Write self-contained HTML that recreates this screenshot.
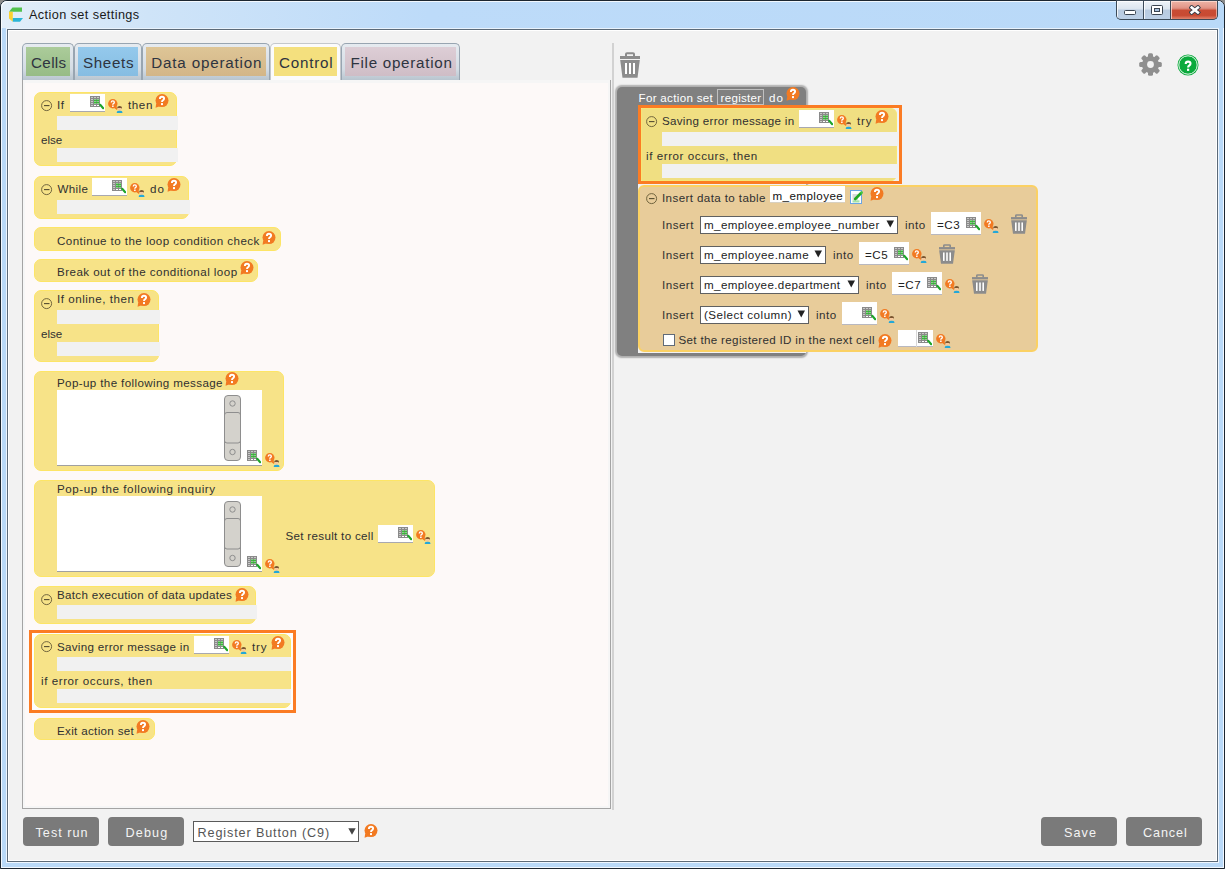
<!DOCTYPE html><html><head><meta charset="utf-8"><style>
html,body{margin:0;padding:0;width:1225px;height:869px;overflow:hidden;background:#8c8c8c;font-family:"Liberation Sans", sans-serif;}
</style></head><body>
<div style="position:absolute;left:0px;top:0px;width:1225px;height:869px;background:#b9d9f8;border-radius:7px 7px 0 0;box-sizing:border-box;border:1px solid #1c2630;"></div>
<div style="position:absolute;left:1px;top:1px;width:1223px;height:28px;background:linear-gradient(90deg,#e2eef9 0%,#cfe4f8 12%,#bddbf9 35%,#b9d9f8 100%);border-radius:6px 6px 0 0;box-shadow:inset 1px 1px 0 rgba(255,255,255,0.8);"></div>
<div style="position:absolute;left:1px;top:28px;width:6px;height:840px;background:#b9d9f8;"></div>
<div style="position:absolute;left:1218px;top:28px;width:6px;height:840px;background:#b9d9f8;"></div>
<div style="position:absolute;left:1px;top:862px;width:1223px;height:6px;background:#b9d9f8;"></div>
<div style="position:absolute;left:1px;top:28px;width:1px;height:840px;background:#f2f8ff;"></div>
<div style="position:absolute;left:6px;top:28px;width:1px;height:835px;background:#eef6ff;"></div>
<div style="position:absolute;left:1223px;top:28px;width:1px;height:840px;background:#f2f8ff;"></div>
<div style="position:absolute;left:1218px;top:28px;width:1px;height:835px;background:#eef6ff;"></div>
<div style="position:absolute;left:6px;top:862px;width:1213px;height:1px;background:#eef6ff;"></div>
<div style="position:absolute;left:1px;top:867px;width:1223px;height:1px;background:#f2f8ff;"></div>
<div style="position:absolute;left:6px;top:28px;width:1213px;height:1px;background:#e8f2fc;"></div>
<div style="position:absolute;left:7px;top:29px;width:1211px;height:833px;background:#f2f2f2;box-sizing:border-box;border:1px solid #5c6a78;box-shadow:inset 1px 1px 0 #fff, inset -1px -1px 0 #fff;"></div>
<svg style="position:absolute;left:9px;top:7px;" width="15" height="16" viewBox="0 0 15 16"><path d="M3.5 0.6 L13 0.6 L13 4.7 L0 4.7 Z" fill="#52c24e"/><path d="M0 4.7 L3.8 4.7 L3.8 14.7 L0 11.6 Z" fill="#fcd232"/><path d="M3.8 10.9 L14 10.9 L11 14.7 L3.8 14.7 Z" fill="#2ab4d6"/></svg>
<div style="position:absolute;left:29px;top:9.25px;font-size:12.70px;line-height:12.70px;color:#1a1a1a;white-space:nowrap;letter-spacing:0.4px;">Action set settings</div>
<div style="position:absolute;left:1116px;top:0;width:102px;height:20px;border:1px solid #3c4a58;border-top:none;border-radius:0 0 5px 5px;box-sizing:border-box;overflow:hidden;background:#3c4a58;"><div style="position:absolute;left:0;top:1px;width:26px;height:18px;background:linear-gradient(#eef3f8 0%,#dbe5ef 45%,#b9cbe0 50%,#bcd0e6 100%);box-shadow:inset 1px 1px 0 rgba(255,255,255,0.8);"></div><div style="position:absolute;left:27px;top:1px;width:26px;height:18px;background:linear-gradient(#eef3f8 0%,#dbe5ef 45%,#b9cbe0 50%,#bcd0e6 100%);box-shadow:inset 1px 1px 0 rgba(255,255,255,0.8);"></div><div style="position:absolute;left:54px;top:1px;width:46px;height:18px;background:linear-gradient(#edb4a6 0%,#e3988a 35%,#d88070 45%,#c94c34 50%,#c84a32 80%,#e2846e 100%);box-shadow:inset 1px 1px 0 rgba(255,220,210,0.8), inset -1px 0 0 rgba(255,220,210,0.6);"></div></div>
<div style="position:absolute;left:1124px;top:10px;width:12px;height:5px;background:#fff;border:1px solid #3a4450;border-radius:1.5px;box-sizing:border-box;"></div>
<div style="position:absolute;left:1151px;top:5px;width:12px;height:10px;background:#fff;border:1px solid #3a4450;border-radius:1.5px;box-sizing:border-box;"></div>
<div style="position:absolute;left:1154px;top:8px;width:6px;height:4px;background:#a8c0dc;border:1px solid #3a4450;box-sizing:border-box;"></div>
<svg style="position:absolute;left:1189px;top:5px;" width="12" height="10" viewBox="0 0 12 10"><path d="M2.7 2.5 L8.9 7.5 M8.9 2.5 L2.7 7.5" stroke="#3a3f48" stroke-width="4.4" stroke-linecap="square"/><path d="M2.7 2.5 L8.9 7.5 M8.9 2.5 L2.7 7.5" stroke="#fff" stroke-width="2.6" stroke-linecap="square"/></svg>
<div style="position:absolute;left:22px;top:43px;width:52px;height:37px;background:linear-gradient(#e6ebf0,#d4dce4 70%,#b9c5cf);border:1px solid #98a5b1;border-bottom:none;border-radius:5px 5px 0 0;box-sizing:border-box;"></div>
<div style="position:absolute;left:26px;top:47px;width:44px;height:29px;background:linear-gradient(#abcb9a,#97bc86);"></div>
<div style="position:absolute;left:31px;top:55.13px;font-size:15.20px;line-height:15.20px;color:#2e3440;white-space:nowrap;letter-spacing:0.359px;">Cells</div>
<div style="position:absolute;left:74px;top:43px;width:68px;height:37px;background:linear-gradient(#e6ebf0,#d4dce4 70%,#b9c5cf);border:1px solid #98a5b1;border-bottom:none;border-radius:5px 5px 0 0;box-sizing:border-box;"></div>
<div style="position:absolute;left:78px;top:47px;width:60px;height:29px;background:linear-gradient(#94c9ec,#86bde2);"></div>
<div style="position:absolute;left:83px;top:55.13px;font-size:15.20px;line-height:15.20px;color:#2e3440;white-space:nowrap;letter-spacing:0.641px;">Sheets</div>
<div style="position:absolute;left:142px;top:43px;width:128px;height:37px;background:linear-gradient(#e6ebf0,#d4dce4 70%,#b9c5cf);border:1px solid #98a5b1;border-bottom:none;border-radius:5px 5px 0 0;box-sizing:border-box;"></div>
<div style="position:absolute;left:146px;top:47px;width:120px;height:29px;background:linear-gradient(#dec596,#d3b688);"></div>
<div style="position:absolute;left:151.3px;top:55.13px;font-size:15.20px;line-height:15.20px;color:#2e3440;white-space:nowrap;letter-spacing:0.809px;">Data operation</div>
<div style="position:absolute;left:270px;top:43px;width:71px;height:40px;background:#fbfbfb;border:1px solid #c4c8cc;border-bottom:none;border-radius:5px 5px 0 0;box-sizing:border-box;"></div>
<div style="position:absolute;left:274px;top:47px;width:63px;height:29px;background:#f4e07e;"></div>
<div style="position:absolute;left:279px;top:55.13px;font-size:15.20px;line-height:15.20px;color:#2e3440;white-space:nowrap;letter-spacing:0.769px;">Control</div>
<div style="position:absolute;left:341px;top:43px;width:119px;height:37px;background:linear-gradient(#e6ebf0,#d4dce4 70%,#b9c5cf);border:1px solid #98a5b1;border-bottom:none;border-radius:5px 5px 0 0;box-sizing:border-box;"></div>
<div style="position:absolute;left:345px;top:47px;width:111px;height:29px;background:linear-gradient(#ddced6,#cfbdc6);"></div>
<div style="position:absolute;left:350.5px;top:55.13px;font-size:15.20px;line-height:15.20px;color:#2e3440;white-space:nowrap;letter-spacing:0.717px;">File operation</div>
<div style="position:absolute;left:22px;top:80px;width:589px;height:729px;background:#f6f6f6;border-left:1px solid #a4a4a4;border-right:1px solid #a4a4a4;border-bottom:1px solid #a4a4a4;box-sizing:border-box;"></div>
<div style="position:absolute;left:25px;top:83px;width:583px;height:723px;background:#fdf9f8;"></div>
<div style="position:absolute;left:612px;top:43px;width:2px;height:767px;background:#d2d2d2;"></div>
<div style="position:absolute;left:34px;top:92px;width:141px;height:72px;background:#f7e388;border:1px solid #fde566;border-radius:7px;"></div>
<svg style="position:absolute;left:41px;top:100px;" width="12" height="12" viewBox="0 0 12 12"><circle cx="5.6" cy="5.6" r="5" fill="none" stroke="#6a5f3a" stroke-width="0.95"/><rect x="3" y="5" width="5.5" height="1.15" fill="#5b5234"/></svg>
<div style="position:absolute;left:57px;top:99.16px;font-size:11.62px;line-height:11.62px;color:#303030;white-space:nowrap;letter-spacing:0.469px;">If</div>
<div style="position:absolute;left:70px;top:94px;width:35px;height:17px;background:#fff;border-bottom:1px solid #a8a8b0;"></div>
<svg style="position:absolute;left:90px;top:96px;" width="14" height="14" viewBox="0 0 14 14"><g shape-rendering="crispEdges"><rect x="0" y="0" width="10" height="11" fill="#8a8a8a"/><rect x="1" y="1" width="2" height="1" fill="#c8c8c8"/><rect x="1" y="3" width="2" height="1" fill="#c8c8c8"/><rect x="1" y="5" width="2" height="1" fill="#c8c8c8"/><rect x="1" y="7" width="2" height="1" fill="#c8c8c8"/><rect x="1" y="9" width="2" height="1" fill="#c8c8c8"/><rect x="4" y="1" width="2" height="1" fill="#c8c8c8"/><rect x="4" y="3" width="2" height="1" fill="#86d486"/><rect x="4" y="5" width="2" height="1" fill="#86d486"/><rect x="4" y="7" width="2" height="1" fill="#86d486"/><rect x="4" y="9" width="2" height="1" fill="#ffffff"/><rect x="7" y="1" width="2" height="1" fill="#c8c8c8"/><rect x="7" y="3" width="2" height="1" fill="#86d486"/><rect x="7" y="5" width="2" height="1" fill="#86d486"/><rect x="7" y="7" width="2" height="1" fill="#86d486"/><rect x="7" y="9" width="2" height="1" fill="#ffffff"/><rect x="4" y="4" width="5" height="1" fill="#3cb43c"/><rect x="4" y="6" width="5" height="1" fill="#3cb43c"/></g><path d="M10.2 8.8 L13.2 12.2" stroke="#1ea52a" stroke-width="2.1" stroke-linecap="round"/></svg>
<svg style="position:absolute;left:108px;top:99px;" width="15" height="14" viewBox="0 0 15 14"><circle cx="4.8" cy="4.7" r="4.7" fill="#f27a22"/><path d="M5.5 8.5 L9.3 11.3 L8.6 7" fill="#f27a22"/><path d="M3.3 3.6 Q3.3 1.9 4.8 1.9 Q6.3 1.9 6.3 3.3 Q6.3 4.2 5.4 4.6 Q4.8 4.9 4.8 5.8" fill="none" stroke="#fff" stroke-width="1.4"/><rect x="4.1" y="6.5" width="1.5" height="1.5" fill="#fff"/><ellipse cx="11.6" cy="8.6" rx="2.4" ry="1.7" fill="#7a5530"/><rect x="10" y="9" width="3.2" height="2.6" fill="#f6c89c"/><path d="M8.8 14 L8.8 13 Q8.8 11.8 11.6 11.8 Q14.4 11.8 14.4 13 L14.4 14 Z" fill="#23a8d8"/></svg>
<div style="position:absolute;left:128px;top:99.16px;font-size:11.62px;line-height:11.62px;color:#303030;white-space:nowrap;letter-spacing:0.586px;">then</div>
<svg style="position:absolute;left:155px;top:94px;" width="14" height="14" viewBox="0 0 14 14"><circle cx="7" cy="6.6" r="6.5" fill="#f27a22"/><path d="M1.2 9.5 L0.6 13.8 L5.5 12" fill="#f27a22"/><path d="M4.9 5.0 Q4.9 2.7 7.0 2.7 Q9.1 2.7 9.1 4.6 Q9.1 5.8 7.9 6.4 Q7.0 6.9 7.0 8.1" fill="none" stroke="#fff" stroke-width="1.9"/><rect x="6.0" y="9.1" width="2" height="2" fill="#fff"/></svg>
<div style="position:absolute;left:57px;top:116px;width:121px;height:14px;background:#f1f1f1;"></div>
<div style="position:absolute;left:41px;top:134.16px;font-size:11.62px;line-height:11.62px;color:#303030;white-space:nowrap;letter-spacing:-0.043px;">else</div>
<div style="position:absolute;left:57px;top:148px;width:121px;height:14px;background:#f1f1f1;"></div>
<div style="position:absolute;left:34px;top:176px;width:153px;height:41px;background:#f7e388;border:1px solid #fde566;border-radius:7px;"></div>
<svg style="position:absolute;left:41px;top:184px;" width="12" height="12" viewBox="0 0 12 12"><circle cx="5.6" cy="5.6" r="5" fill="none" stroke="#6a5f3a" stroke-width="0.95"/><rect x="3" y="5" width="5.5" height="1.15" fill="#5b5234"/></svg>
<div style="position:absolute;left:57.5px;top:183.16px;font-size:11.62px;line-height:11.62px;color:#303030;white-space:nowrap;letter-spacing:0.334px;">While</div>
<div style="position:absolute;left:92px;top:178px;width:35px;height:17px;background:#fff;border-bottom:1px solid #a8a8b0;"></div>
<svg style="position:absolute;left:112px;top:180px;" width="14" height="14" viewBox="0 0 14 14"><g shape-rendering="crispEdges"><rect x="0" y="0" width="10" height="11" fill="#8a8a8a"/><rect x="1" y="1" width="2" height="1" fill="#c8c8c8"/><rect x="1" y="3" width="2" height="1" fill="#c8c8c8"/><rect x="1" y="5" width="2" height="1" fill="#c8c8c8"/><rect x="1" y="7" width="2" height="1" fill="#c8c8c8"/><rect x="1" y="9" width="2" height="1" fill="#c8c8c8"/><rect x="4" y="1" width="2" height="1" fill="#c8c8c8"/><rect x="4" y="3" width="2" height="1" fill="#86d486"/><rect x="4" y="5" width="2" height="1" fill="#86d486"/><rect x="4" y="7" width="2" height="1" fill="#86d486"/><rect x="4" y="9" width="2" height="1" fill="#ffffff"/><rect x="7" y="1" width="2" height="1" fill="#c8c8c8"/><rect x="7" y="3" width="2" height="1" fill="#86d486"/><rect x="7" y="5" width="2" height="1" fill="#86d486"/><rect x="7" y="7" width="2" height="1" fill="#86d486"/><rect x="7" y="9" width="2" height="1" fill="#ffffff"/><rect x="4" y="4" width="5" height="1" fill="#3cb43c"/><rect x="4" y="6" width="5" height="1" fill="#3cb43c"/></g><path d="M10.2 8.8 L13.2 12.2" stroke="#1ea52a" stroke-width="2.1" stroke-linecap="round"/></svg>
<svg style="position:absolute;left:130px;top:183px;" width="15" height="14" viewBox="0 0 15 14"><circle cx="4.8" cy="4.7" r="4.7" fill="#f27a22"/><path d="M5.5 8.5 L9.3 11.3 L8.6 7" fill="#f27a22"/><path d="M3.3 3.6 Q3.3 1.9 4.8 1.9 Q6.3 1.9 6.3 3.3 Q6.3 4.2 5.4 4.6 Q4.8 4.9 4.8 5.8" fill="none" stroke="#fff" stroke-width="1.4"/><rect x="4.1" y="6.5" width="1.5" height="1.5" fill="#fff"/><ellipse cx="11.6" cy="8.6" rx="2.4" ry="1.7" fill="#7a5530"/><rect x="10" y="9" width="3.2" height="2.6" fill="#f6c89c"/><path d="M8.8 14 L8.8 13 Q8.8 11.8 11.6 11.8 Q14.4 11.8 14.4 13 L14.4 14 Z" fill="#23a8d8"/></svg>
<div style="position:absolute;left:150px;top:183.16px;font-size:11.62px;line-height:11.62px;color:#303030;white-space:nowrap;letter-spacing:0.969px;">do</div>
<svg style="position:absolute;left:167px;top:178px;" width="14" height="14" viewBox="0 0 14 14"><circle cx="7" cy="6.6" r="6.5" fill="#f27a22"/><path d="M1.2 9.5 L0.6 13.8 L5.5 12" fill="#f27a22"/><path d="M4.9 5.0 Q4.9 2.7 7.0 2.7 Q9.1 2.7 9.1 4.6 Q9.1 5.8 7.9 6.4 Q7.0 6.9 7.0 8.1" fill="none" stroke="#fff" stroke-width="1.9"/><rect x="6.0" y="9.1" width="2" height="2" fill="#fff"/></svg>
<div style="position:absolute;left:57px;top:200px;width:133px;height:14px;background:#f1f1f1;"></div>
<div style="position:absolute;left:34px;top:227px;width:245px;height:22px;background:#f7e388;border:1px solid #fde566;border-radius:7px;"></div>
<div style="position:absolute;left:57px;top:235.16px;font-size:11.62px;line-height:11.62px;color:#303030;white-space:nowrap;letter-spacing:0.434px;">Continue to the loop condition check</div>
<svg style="position:absolute;left:262px;top:231px;" width="14" height="14" viewBox="0 0 14 14"><circle cx="7" cy="6.6" r="6.5" fill="#f27a22"/><path d="M1.2 9.5 L0.6 13.8 L5.5 12" fill="#f27a22"/><path d="M4.9 5.0 Q4.9 2.7 7.0 2.7 Q9.1 2.7 9.1 4.6 Q9.1 5.8 7.9 6.4 Q7.0 6.9 7.0 8.1" fill="none" stroke="#fff" stroke-width="1.9"/><rect x="6.0" y="9.1" width="2" height="2" fill="#fff"/></svg>
<div style="position:absolute;left:34px;top:259px;width:222px;height:21px;background:#f7e388;border:1px solid #fde566;border-radius:7px;"></div>
<div style="position:absolute;left:57px;top:266.16px;font-size:11.62px;line-height:11.62px;color:#303030;white-space:nowrap;letter-spacing:0.445px;">Break out of the conditional loop</div>
<svg style="position:absolute;left:240px;top:261px;" width="14" height="14" viewBox="0 0 14 14"><circle cx="7" cy="6.6" r="6.5" fill="#f27a22"/><path d="M1.2 9.5 L0.6 13.8 L5.5 12" fill="#f27a22"/><path d="M4.9 5.0 Q4.9 2.7 7.0 2.7 Q9.1 2.7 9.1 4.6 Q9.1 5.8 7.9 6.4 Q7.0 6.9 7.0 8.1" fill="none" stroke="#fff" stroke-width="1.9"/><rect x="6.0" y="9.1" width="2" height="2" fill="#fff"/></svg>
<div style="position:absolute;left:34px;top:290px;width:123px;height:70px;background:#f7e388;border:1px solid #fde566;border-radius:7px;"></div>
<svg style="position:absolute;left:41px;top:298px;" width="12" height="12" viewBox="0 0 12 12"><circle cx="5.6" cy="5.6" r="5" fill="none" stroke="#6a5f3a" stroke-width="0.95"/><rect x="3" y="5" width="5.5" height="1.15" fill="#5b5234"/></svg>
<div style="position:absolute;left:57px;top:293.16px;font-size:11.62px;line-height:11.62px;color:#303030;white-space:nowrap;letter-spacing:0.518px;">If online, then</div>
<svg style="position:absolute;left:137px;top:293px;" width="14" height="14" viewBox="0 0 14 14"><circle cx="7" cy="6.6" r="6.5" fill="#f27a22"/><path d="M1.2 9.5 L0.6 13.8 L5.5 12" fill="#f27a22"/><path d="M4.9 5.0 Q4.9 2.7 7.0 2.7 Q9.1 2.7 9.1 4.6 Q9.1 5.8 7.9 6.4 Q7.0 6.9 7.0 8.1" fill="none" stroke="#fff" stroke-width="1.9"/><rect x="6.0" y="9.1" width="2" height="2" fill="#fff"/></svg>
<div style="position:absolute;left:57px;top:310px;width:103px;height:14px;background:#f1f1f1;"></div>
<div style="position:absolute;left:41px;top:328.16px;font-size:11.62px;line-height:11.62px;color:#303030;white-space:nowrap;letter-spacing:-0.043px;">else</div>
<div style="position:absolute;left:57px;top:342px;width:103px;height:14px;background:#f1f1f1;"></div>
<div style="position:absolute;left:34px;top:371px;width:248px;height:98px;background:#f7e388;border:1px solid #fde566;border-radius:7px;"></div>
<div style="position:absolute;left:57px;top:377.16px;font-size:11.62px;line-height:11.62px;color:#303030;white-space:nowrap;letter-spacing:0.370px;">Pop-up the following message</div>
<svg style="position:absolute;left:225px;top:372px;" width="14" height="14" viewBox="0 0 14 14"><circle cx="7" cy="6.6" r="6.5" fill="#f27a22"/><path d="M1.2 9.5 L0.6 13.8 L5.5 12" fill="#f27a22"/><path d="M4.9 5.0 Q4.9 2.7 7.0 2.7 Q9.1 2.7 9.1 4.6 Q9.1 5.8 7.9 6.4 Q7.0 6.9 7.0 8.1" fill="none" stroke="#fff" stroke-width="1.9"/><rect x="6.0" y="9.1" width="2" height="2" fill="#fff"/></svg>
<div style="position:absolute;left:57px;top:390px;width:205px;height:75px;background:#fff;border-bottom:1px solid #a0a0a0;"></div>
<svg style="position:absolute;left:224px;top:395px;" width="17" height="66" viewBox="0 0 17 66"><rect x="0.5" y="0.5" width="16" height="65" rx="3.5" fill="#d4d2cc" stroke="#8e8e8e"/><circle cx="8.5" cy="8.5" r="2.7" fill="none" stroke="#8e8e8e"/><circle cx="8.5" cy="57" r="2.7" fill="none" stroke="#8e8e8e"/><path d="M0.5 20 Q0.5 17.5 3 17.5 L14 17.5 Q16.5 17.5 16.5 20 M0.5 45.5 Q0.5 48 3 48 L14 48 Q16.5 48 16.5 45.5" fill="none" stroke="#8e8e8e"/></svg>
<svg style="position:absolute;left:247px;top:450px;" width="14" height="14" viewBox="0 0 14 14"><g shape-rendering="crispEdges"><rect x="0" y="0" width="10" height="11" fill="#8a8a8a"/><rect x="1" y="1" width="2" height="1" fill="#c8c8c8"/><rect x="1" y="3" width="2" height="1" fill="#c8c8c8"/><rect x="1" y="5" width="2" height="1" fill="#c8c8c8"/><rect x="1" y="7" width="2" height="1" fill="#c8c8c8"/><rect x="1" y="9" width="2" height="1" fill="#c8c8c8"/><rect x="4" y="1" width="2" height="1" fill="#c8c8c8"/><rect x="4" y="3" width="2" height="1" fill="#86d486"/><rect x="4" y="5" width="2" height="1" fill="#86d486"/><rect x="4" y="7" width="2" height="1" fill="#86d486"/><rect x="4" y="9" width="2" height="1" fill="#ffffff"/><rect x="7" y="1" width="2" height="1" fill="#c8c8c8"/><rect x="7" y="3" width="2" height="1" fill="#86d486"/><rect x="7" y="5" width="2" height="1" fill="#86d486"/><rect x="7" y="7" width="2" height="1" fill="#86d486"/><rect x="7" y="9" width="2" height="1" fill="#ffffff"/><rect x="4" y="4" width="5" height="1" fill="#3cb43c"/><rect x="4" y="6" width="5" height="1" fill="#3cb43c"/></g><path d="M10.2 8.8 L13.2 12.2" stroke="#1ea52a" stroke-width="2.1" stroke-linecap="round"/></svg>
<svg style="position:absolute;left:265px;top:453px;" width="15" height="14" viewBox="0 0 15 14"><circle cx="4.8" cy="4.7" r="4.7" fill="#f27a22"/><path d="M5.5 8.5 L9.3 11.3 L8.6 7" fill="#f27a22"/><path d="M3.3 3.6 Q3.3 1.9 4.8 1.9 Q6.3 1.9 6.3 3.3 Q6.3 4.2 5.4 4.6 Q4.8 4.9 4.8 5.8" fill="none" stroke="#fff" stroke-width="1.4"/><rect x="4.1" y="6.5" width="1.5" height="1.5" fill="#fff"/><ellipse cx="11.6" cy="8.6" rx="2.4" ry="1.7" fill="#7a5530"/><rect x="10" y="9" width="3.2" height="2.6" fill="#f6c89c"/><path d="M8.8 14 L8.8 13 Q8.8 11.8 11.6 11.8 Q14.4 11.8 14.4 13 L14.4 14 Z" fill="#23a8d8"/></svg>
<div style="position:absolute;left:34px;top:480px;width:399px;height:95px;background:#f7e388;border:1px solid #fde566;border-radius:7px;"></div>
<div style="position:absolute;left:57px;top:483.16px;font-size:11.62px;line-height:11.62px;color:#303030;white-space:nowrap;letter-spacing:0.572px;">Pop-up the following inquiry</div>
<div style="position:absolute;left:57px;top:496px;width:205px;height:75px;background:#fff;border-bottom:1px solid #a0a0a0;"></div>
<svg style="position:absolute;left:224px;top:501px;" width="17" height="66" viewBox="0 0 17 66"><rect x="0.5" y="0.5" width="16" height="65" rx="3.5" fill="#d4d2cc" stroke="#8e8e8e"/><circle cx="8.5" cy="8.5" r="2.7" fill="none" stroke="#8e8e8e"/><circle cx="8.5" cy="57" r="2.7" fill="none" stroke="#8e8e8e"/><path d="M0.5 20 Q0.5 17.5 3 17.5 L14 17.5 Q16.5 17.5 16.5 20 M0.5 45.5 Q0.5 48 3 48 L14 48 Q16.5 48 16.5 45.5" fill="none" stroke="#8e8e8e"/></svg>
<svg style="position:absolute;left:247px;top:556px;" width="14" height="14" viewBox="0 0 14 14"><g shape-rendering="crispEdges"><rect x="0" y="0" width="10" height="11" fill="#8a8a8a"/><rect x="1" y="1" width="2" height="1" fill="#c8c8c8"/><rect x="1" y="3" width="2" height="1" fill="#c8c8c8"/><rect x="1" y="5" width="2" height="1" fill="#c8c8c8"/><rect x="1" y="7" width="2" height="1" fill="#c8c8c8"/><rect x="1" y="9" width="2" height="1" fill="#c8c8c8"/><rect x="4" y="1" width="2" height="1" fill="#c8c8c8"/><rect x="4" y="3" width="2" height="1" fill="#86d486"/><rect x="4" y="5" width="2" height="1" fill="#86d486"/><rect x="4" y="7" width="2" height="1" fill="#86d486"/><rect x="4" y="9" width="2" height="1" fill="#ffffff"/><rect x="7" y="1" width="2" height="1" fill="#c8c8c8"/><rect x="7" y="3" width="2" height="1" fill="#86d486"/><rect x="7" y="5" width="2" height="1" fill="#86d486"/><rect x="7" y="7" width="2" height="1" fill="#86d486"/><rect x="7" y="9" width="2" height="1" fill="#ffffff"/><rect x="4" y="4" width="5" height="1" fill="#3cb43c"/><rect x="4" y="6" width="5" height="1" fill="#3cb43c"/></g><path d="M10.2 8.8 L13.2 12.2" stroke="#1ea52a" stroke-width="2.1" stroke-linecap="round"/></svg>
<svg style="position:absolute;left:265px;top:559px;" width="15" height="14" viewBox="0 0 15 14"><circle cx="4.8" cy="4.7" r="4.7" fill="#f27a22"/><path d="M5.5 8.5 L9.3 11.3 L8.6 7" fill="#f27a22"/><path d="M3.3 3.6 Q3.3 1.9 4.8 1.9 Q6.3 1.9 6.3 3.3 Q6.3 4.2 5.4 4.6 Q4.8 4.9 4.8 5.8" fill="none" stroke="#fff" stroke-width="1.4"/><rect x="4.1" y="6.5" width="1.5" height="1.5" fill="#fff"/><ellipse cx="11.6" cy="8.6" rx="2.4" ry="1.7" fill="#7a5530"/><rect x="10" y="9" width="3.2" height="2.6" fill="#f6c89c"/><path d="M8.8 14 L8.8 13 Q8.8 11.8 11.6 11.8 Q14.4 11.8 14.4 13 L14.4 14 Z" fill="#23a8d8"/></svg>
<div style="position:absolute;left:285.5px;top:530.16px;font-size:11.62px;line-height:11.62px;color:#303030;white-space:nowrap;letter-spacing:0.304px;">Set result to cell</div>
<div style="position:absolute;left:378px;top:525px;width:35px;height:17px;background:#fff;border-bottom:1px solid #a8a8b0;"></div>
<svg style="position:absolute;left:398px;top:527px;" width="14" height="14" viewBox="0 0 14 14"><g shape-rendering="crispEdges"><rect x="0" y="0" width="10" height="11" fill="#8a8a8a"/><rect x="1" y="1" width="2" height="1" fill="#c8c8c8"/><rect x="1" y="3" width="2" height="1" fill="#c8c8c8"/><rect x="1" y="5" width="2" height="1" fill="#c8c8c8"/><rect x="1" y="7" width="2" height="1" fill="#c8c8c8"/><rect x="1" y="9" width="2" height="1" fill="#c8c8c8"/><rect x="4" y="1" width="2" height="1" fill="#c8c8c8"/><rect x="4" y="3" width="2" height="1" fill="#86d486"/><rect x="4" y="5" width="2" height="1" fill="#86d486"/><rect x="4" y="7" width="2" height="1" fill="#86d486"/><rect x="4" y="9" width="2" height="1" fill="#ffffff"/><rect x="7" y="1" width="2" height="1" fill="#c8c8c8"/><rect x="7" y="3" width="2" height="1" fill="#86d486"/><rect x="7" y="5" width="2" height="1" fill="#86d486"/><rect x="7" y="7" width="2" height="1" fill="#86d486"/><rect x="7" y="9" width="2" height="1" fill="#ffffff"/><rect x="4" y="4" width="5" height="1" fill="#3cb43c"/><rect x="4" y="6" width="5" height="1" fill="#3cb43c"/></g><path d="M10.2 8.8 L13.2 12.2" stroke="#1ea52a" stroke-width="2.1" stroke-linecap="round"/></svg>
<svg style="position:absolute;left:416px;top:530px;" width="15" height="14" viewBox="0 0 15 14"><circle cx="4.8" cy="4.7" r="4.7" fill="#f27a22"/><path d="M5.5 8.5 L9.3 11.3 L8.6 7" fill="#f27a22"/><path d="M3.3 3.6 Q3.3 1.9 4.8 1.9 Q6.3 1.9 6.3 3.3 Q6.3 4.2 5.4 4.6 Q4.8 4.9 4.8 5.8" fill="none" stroke="#fff" stroke-width="1.4"/><rect x="4.1" y="6.5" width="1.5" height="1.5" fill="#fff"/><ellipse cx="11.6" cy="8.6" rx="2.4" ry="1.7" fill="#7a5530"/><rect x="10" y="9" width="3.2" height="2.6" fill="#f6c89c"/><path d="M8.8 14 L8.8 13 Q8.8 11.8 11.6 11.8 Q14.4 11.8 14.4 13 L14.4 14 Z" fill="#23a8d8"/></svg>
<div style="position:absolute;left:34px;top:586px;width:220px;height:36px;background:#f7e388;border:1px solid #fde566;border-radius:7px;"></div>
<svg style="position:absolute;left:41px;top:594px;" width="12" height="12" viewBox="0 0 12 12"><circle cx="5.6" cy="5.6" r="5" fill="none" stroke="#6a5f3a" stroke-width="0.95"/><rect x="3" y="5" width="5.5" height="1.15" fill="#5b5234"/></svg>
<div style="position:absolute;left:57px;top:589.16px;font-size:11.62px;line-height:11.62px;color:#303030;white-space:nowrap;letter-spacing:0.300px;">Batch execution of data updates</div>
<svg style="position:absolute;left:235px;top:588px;" width="14" height="14" viewBox="0 0 14 14"><circle cx="7" cy="6.6" r="6.5" fill="#f27a22"/><path d="M1.2 9.5 L0.6 13.8 L5.5 12" fill="#f27a22"/><path d="M4.9 5.0 Q4.9 2.7 7.0 2.7 Q9.1 2.7 9.1 4.6 Q9.1 5.8 7.9 6.4 Q7.0 6.9 7.0 8.1" fill="none" stroke="#fff" stroke-width="1.9"/><rect x="6.0" y="9.1" width="2" height="2" fill="#fff"/></svg>
<div style="position:absolute;left:57px;top:605px;width:200px;height:14px;background:#f1f1f1;"></div>
<div style="position:absolute;left:29px;top:630px;width:267px;height:83px;border:3px solid #fb7c24;box-sizing:border-box;background:#fdfdfd;"></div>
<div style="position:absolute;left:34px;top:634px;width:255px;height:72px;background:#f7e388;border:1px solid #fde566;border-radius:7px;"></div>
<svg style="position:absolute;left:41px;top:641px;" width="12" height="12" viewBox="0 0 12 12"><circle cx="5.6" cy="5.6" r="5" fill="none" stroke="#6a5f3a" stroke-width="0.95"/><rect x="3" y="5" width="5.5" height="1.15" fill="#5b5234"/></svg>
<div style="position:absolute;left:57px;top:641.16px;font-size:11.62px;line-height:11.62px;color:#303030;white-space:nowrap;letter-spacing:0.289px;">Saving error message in</div>
<div style="position:absolute;left:194px;top:636px;width:35px;height:17px;background:#fff;border-bottom:1px solid #a8a8b0;"></div>
<svg style="position:absolute;left:214px;top:638px;" width="14" height="14" viewBox="0 0 14 14"><g shape-rendering="crispEdges"><rect x="0" y="0" width="10" height="11" fill="#8a8a8a"/><rect x="1" y="1" width="2" height="1" fill="#c8c8c8"/><rect x="1" y="3" width="2" height="1" fill="#c8c8c8"/><rect x="1" y="5" width="2" height="1" fill="#c8c8c8"/><rect x="1" y="7" width="2" height="1" fill="#c8c8c8"/><rect x="1" y="9" width="2" height="1" fill="#c8c8c8"/><rect x="4" y="1" width="2" height="1" fill="#c8c8c8"/><rect x="4" y="3" width="2" height="1" fill="#86d486"/><rect x="4" y="5" width="2" height="1" fill="#86d486"/><rect x="4" y="7" width="2" height="1" fill="#86d486"/><rect x="4" y="9" width="2" height="1" fill="#ffffff"/><rect x="7" y="1" width="2" height="1" fill="#c8c8c8"/><rect x="7" y="3" width="2" height="1" fill="#86d486"/><rect x="7" y="5" width="2" height="1" fill="#86d486"/><rect x="7" y="7" width="2" height="1" fill="#86d486"/><rect x="7" y="9" width="2" height="1" fill="#ffffff"/><rect x="4" y="4" width="5" height="1" fill="#3cb43c"/><rect x="4" y="6" width="5" height="1" fill="#3cb43c"/></g><path d="M10.2 8.8 L13.2 12.2" stroke="#1ea52a" stroke-width="2.1" stroke-linecap="round"/></svg>
<svg style="position:absolute;left:232px;top:640px;" width="15" height="14" viewBox="0 0 15 14"><circle cx="4.8" cy="4.7" r="4.7" fill="#f27a22"/><path d="M5.5 8.5 L9.3 11.3 L8.6 7" fill="#f27a22"/><path d="M3.3 3.6 Q3.3 1.9 4.8 1.9 Q6.3 1.9 6.3 3.3 Q6.3 4.2 5.4 4.6 Q4.8 4.9 4.8 5.8" fill="none" stroke="#fff" stroke-width="1.4"/><rect x="4.1" y="6.5" width="1.5" height="1.5" fill="#fff"/><ellipse cx="11.6" cy="8.6" rx="2.4" ry="1.7" fill="#7a5530"/><rect x="10" y="9" width="3.2" height="2.6" fill="#f6c89c"/><path d="M8.8 14 L8.8 13 Q8.8 11.8 11.6 11.8 Q14.4 11.8 14.4 13 L14.4 14 Z" fill="#23a8d8"/></svg>
<div style="position:absolute;left:252px;top:641.16px;font-size:11.62px;line-height:11.62px;color:#303030;white-space:nowrap;letter-spacing:0.839px;">try</div>
<svg style="position:absolute;left:271px;top:636px;" width="14" height="14" viewBox="0 0 14 14"><circle cx="7" cy="6.6" r="6.5" fill="#f27a22"/><path d="M1.2 9.5 L0.6 13.8 L5.5 12" fill="#f27a22"/><path d="M4.9 5.0 Q4.9 2.7 7.0 2.7 Q9.1 2.7 9.1 4.6 Q9.1 5.8 7.9 6.4 Q7.0 6.9 7.0 8.1" fill="none" stroke="#fff" stroke-width="1.9"/><rect x="6.0" y="9.1" width="2" height="2" fill="#fff"/></svg>
<div style="position:absolute;left:57px;top:657px;width:234px;height:14px;background:#f1f1f1;"></div>
<div style="position:absolute;left:41px;top:675.16px;font-size:11.62px;line-height:11.62px;color:#303030;white-space:nowrap;letter-spacing:0.560px;">if error occurs, then</div>
<div style="position:absolute;left:57px;top:689px;width:234px;height:14px;background:#f1f1f1;"></div>
<div style="position:absolute;left:34px;top:718px;width:119px;height:20px;background:#f7e388;border:1px solid #fde566;border-radius:7px;"></div>
<div style="position:absolute;left:57px;top:725.16px;font-size:11.62px;line-height:11.62px;color:#303030;white-space:nowrap;letter-spacing:0.322px;">Exit action set</div>
<svg style="position:absolute;left:136px;top:720px;" width="14" height="14" viewBox="0 0 14 14"><circle cx="7" cy="6.6" r="6.5" fill="#f27a22"/><path d="M1.2 9.5 L0.6 13.8 L5.5 12" fill="#f27a22"/><path d="M4.9 5.0 Q4.9 2.7 7.0 2.7 Q9.1 2.7 9.1 4.6 Q9.1 5.8 7.9 6.4 Q7.0 6.9 7.0 8.1" fill="none" stroke="#fff" stroke-width="1.9"/><rect x="6.0" y="9.1" width="2" height="2" fill="#fff"/></svg>
<svg style="position:absolute;left:620px;top:52px;" width="20" height="26" viewBox="0 0 20 26"><g transform="scale(1.0000,1.0000)"><path d="M5 4.5 L5 2 Q5 0.3 7 0.3 L13 0.3 Q15 0.3 15 2 L15 4.5 L13 4.5 L13 2.3 L7 2.3 L7 4.5 Z" fill="#8c8c8c"/><rect x="0" y="4" width="20" height="3" fill="#8c8c8c"/><path d="M0.2 8 L19.8 8 L17.5 25.8 L2.5 25.8 Z" fill="#8c8c8c"/><rect x="5" y="11" width="2" height="11" fill="#fff"/><rect x="9" y="11" width="2" height="11" fill="#fff"/><rect x="13" y="11" width="2" height="11" fill="#fff"/></g></svg>
<svg style="position:absolute;left:1139px;top:53px;" width="23" height="23" viewBox="0 0 23 23"><rect x="9" y="0.2" width="5" height="6" rx="1.5" fill="#8f8f8f" transform="rotate(0 11.5 11.5)"/><rect x="9" y="0.2" width="5" height="6" rx="1.5" fill="#8f8f8f" transform="rotate(45 11.5 11.5)"/><rect x="9" y="0.2" width="5" height="6" rx="1.5" fill="#8f8f8f" transform="rotate(90 11.5 11.5)"/><rect x="9" y="0.2" width="5" height="6" rx="1.5" fill="#8f8f8f" transform="rotate(135 11.5 11.5)"/><rect x="9" y="0.2" width="5" height="6" rx="1.5" fill="#8f8f8f" transform="rotate(180 11.5 11.5)"/><rect x="9" y="0.2" width="5" height="6" rx="1.5" fill="#8f8f8f" transform="rotate(225 11.5 11.5)"/><rect x="9" y="0.2" width="5" height="6" rx="1.5" fill="#8f8f8f" transform="rotate(270 11.5 11.5)"/><rect x="9" y="0.2" width="5" height="6" rx="1.5" fill="#8f8f8f" transform="rotate(315 11.5 11.5)"/><circle cx="11.5" cy="11.5" r="8.6" fill="#8f8f8f"/><circle cx="11.5" cy="11.5" r="3.4" fill="#f2f2f2"/></svg>
<svg style="position:absolute;left:1177px;top:54px;" width="22" height="22" viewBox="0 0 22 22"><circle cx="11" cy="11" r="10.5" fill="#0aaa3c"/><circle cx="11" cy="11" r="9.2" fill="none" stroke="#fff" stroke-width="0.9"/><path d="M8.7 10.0 Q8.7 7.6 11.1 7.6 Q13.5 7.6 13.5 9.6 Q13.5 10.9 12.3 11.5 Q11.1 12.1 11.1 13.6" fill="none" stroke="#fff" stroke-width="2.1"/><rect x="10" y="14.7" width="2.2" height="2.2" fill="#fff"/></svg>
<div style="position:absolute;left:617px;top:87px;width:189px;height:269px;background:#808080;border-radius:5px;box-shadow:0 0 1.5px 1.5px rgba(0,0,0,0.28);"></div>
<div style="position:absolute;left:638px;top:105px;width:168px;height:248px;background:#f2f2f2;"></div>
<div style="position:absolute;left:638.5px;top:92.16px;font-size:11.62px;line-height:11.62px;color:#fff;white-space:nowrap;letter-spacing:0.304px;">For action set</div>
<div style="position:absolute;left:717px;top:89px;width:47px;height:16px;border:1px solid #c0c0c0;box-sizing:border-box;"></div>
<div style="position:absolute;left:720.5px;top:92.16px;font-size:11.62px;line-height:11.62px;color:#fff;white-space:nowrap;letter-spacing:0.288px;">register</div>
<div style="position:absolute;left:769px;top:92.16px;font-size:11.62px;line-height:11.62px;color:#fff;white-space:nowrap;letter-spacing:0.969px;">do</div>
<svg style="position:absolute;left:786px;top:87px;" width="14" height="14" viewBox="0 0 14 14"><circle cx="7" cy="6.6" r="6.5" fill="#f27a22"/><path d="M1.2 9.5 L0.6 13.8 L5.5 12" fill="#f27a22"/><path d="M4.9 5.0 Q4.9 2.7 7.0 2.7 Q9.1 2.7 9.1 4.6 Q9.1 5.8 7.9 6.4 Q7.0 6.9 7.0 8.1" fill="none" stroke="#fff" stroke-width="1.9"/><rect x="6.0" y="9.1" width="2" height="2" fill="#fff"/></svg>
<div style="position:absolute;left:638px;top:105px;width:264px;height:79px;border:3px solid #fb7c24;box-sizing:border-box;background:#f2f2f2;"></div>
<div style="position:absolute;left:641px;top:108px;width:254px;height:71px;background:#f0df82;border:1px solid #f6e676;border-radius:0 6px 6px 0;"></div>
<svg style="position:absolute;left:646px;top:116px;" width="12" height="12" viewBox="0 0 12 12"><circle cx="5.6" cy="5.6" r="5" fill="none" stroke="#6a5f3a" stroke-width="0.95"/><rect x="3" y="5" width="5.5" height="1.15" fill="#5b5234"/></svg>
<div style="position:absolute;left:662px;top:115.16px;font-size:11.62px;line-height:11.62px;color:#303030;white-space:nowrap;letter-spacing:0.289px;">Saving error message in</div>
<div style="position:absolute;left:799px;top:110px;width:35px;height:17px;background:#fff;border-bottom:1px solid #a8a8b0;"></div>
<svg style="position:absolute;left:819px;top:112px;" width="14" height="14" viewBox="0 0 14 14"><g shape-rendering="crispEdges"><rect x="0" y="0" width="10" height="11" fill="#8a8a8a"/><rect x="1" y="1" width="2" height="1" fill="#c8c8c8"/><rect x="1" y="3" width="2" height="1" fill="#c8c8c8"/><rect x="1" y="5" width="2" height="1" fill="#c8c8c8"/><rect x="1" y="7" width="2" height="1" fill="#c8c8c8"/><rect x="1" y="9" width="2" height="1" fill="#c8c8c8"/><rect x="4" y="1" width="2" height="1" fill="#c8c8c8"/><rect x="4" y="3" width="2" height="1" fill="#86d486"/><rect x="4" y="5" width="2" height="1" fill="#86d486"/><rect x="4" y="7" width="2" height="1" fill="#86d486"/><rect x="4" y="9" width="2" height="1" fill="#ffffff"/><rect x="7" y="1" width="2" height="1" fill="#c8c8c8"/><rect x="7" y="3" width="2" height="1" fill="#86d486"/><rect x="7" y="5" width="2" height="1" fill="#86d486"/><rect x="7" y="7" width="2" height="1" fill="#86d486"/><rect x="7" y="9" width="2" height="1" fill="#ffffff"/><rect x="4" y="4" width="5" height="1" fill="#3cb43c"/><rect x="4" y="6" width="5" height="1" fill="#3cb43c"/></g><path d="M10.2 8.8 L13.2 12.2" stroke="#1ea52a" stroke-width="2.1" stroke-linecap="round"/></svg>
<svg style="position:absolute;left:837px;top:115px;" width="15" height="14" viewBox="0 0 15 14"><circle cx="4.8" cy="4.7" r="4.7" fill="#f27a22"/><path d="M5.5 8.5 L9.3 11.3 L8.6 7" fill="#f27a22"/><path d="M3.3 3.6 Q3.3 1.9 4.8 1.9 Q6.3 1.9 6.3 3.3 Q6.3 4.2 5.4 4.6 Q4.8 4.9 4.8 5.8" fill="none" stroke="#fff" stroke-width="1.4"/><rect x="4.1" y="6.5" width="1.5" height="1.5" fill="#fff"/><ellipse cx="11.6" cy="8.6" rx="2.4" ry="1.7" fill="#7a5530"/><rect x="10" y="9" width="3.2" height="2.6" fill="#f6c89c"/><path d="M8.8 14 L8.8 13 Q8.8 11.8 11.6 11.8 Q14.4 11.8 14.4 13 L14.4 14 Z" fill="#23a8d8"/></svg>
<div style="position:absolute;left:857px;top:115.16px;font-size:11.62px;line-height:11.62px;color:#303030;white-space:nowrap;letter-spacing:0.839px;">try</div>
<svg style="position:absolute;left:875px;top:110px;" width="14" height="14" viewBox="0 0 14 14"><circle cx="7" cy="6.6" r="6.5" fill="#f27a22"/><path d="M1.2 9.5 L0.6 13.8 L5.5 12" fill="#f27a22"/><path d="M4.9 5.0 Q4.9 2.7 7.0 2.7 Q9.1 2.7 9.1 4.6 Q9.1 5.8 7.9 6.4 Q7.0 6.9 7.0 8.1" fill="none" stroke="#fff" stroke-width="1.9"/><rect x="6.0" y="9.1" width="2" height="2" fill="#fff"/></svg>
<div style="position:absolute;left:662px;top:132px;width:237px;height:14px;background:#f1f1f1;"></div>
<div style="position:absolute;left:646px;top:150.16px;font-size:11.62px;line-height:11.62px;color:#303030;white-space:nowrap;letter-spacing:0.560px;">if error occurs, then</div>
<div style="position:absolute;left:662px;top:164px;width:237px;height:14px;background:#f1f1f1;"></div>
<div style="position:absolute;left:638px;top:185px;width:396px;height:163px;background:#e8cc9a;border:2px solid #fbd164;border-radius:6px;"></div>
<svg style="position:absolute;left:646px;top:193px;" width="12" height="12" viewBox="0 0 12 12"><circle cx="5.6" cy="5.6" r="5" fill="none" stroke="#6a5f3a" stroke-width="0.95"/><rect x="3" y="5" width="5.5" height="1.15" fill="#5b5234"/></svg>
<div style="position:absolute;left:662px;top:192.16px;font-size:11.62px;line-height:11.62px;color:#303030;white-space:nowrap;letter-spacing:0.386px;">Insert data to table</div>
<div style="position:absolute;left:770px;top:186px;width:75px;height:17px;background:#fff;border-bottom:1px solid #d8d0c0;box-sizing:border-box;"></div>
<div style="position:absolute;left:772.5px;top:190.16px;font-size:11.62px;line-height:11.62px;color:#111;white-space:nowrap;letter-spacing:0.425px;">m_employee</div>
<svg style="position:absolute;left:850px;top:190px;" width="14" height="14" viewBox="0 0 14 14"><rect x="0.5" y="0.5" width="11" height="13" fill="#fff" stroke="#6aa4e4"/><rect x="2.5" y="4" width="5.5" height="6" fill="#dadada"/><rect x="2.5" y="10.3" width="7" height="2.2" fill="#a6e2a6"/><path d="M5.2 9.0 L10.9 3.3" stroke="#22a822" stroke-width="2.7" stroke-linecap="round"/><circle cx="11.6" cy="2.6" r="1.4" fill="#44c844"/></svg>
<svg style="position:absolute;left:870px;top:187px;" width="14" height="14" viewBox="0 0 14 14"><circle cx="7" cy="6.6" r="6.5" fill="#f27a22"/><path d="M1.2 9.5 L0.6 13.8 L5.5 12" fill="#f27a22"/><path d="M4.9 5.0 Q4.9 2.7 7.0 2.7 Q9.1 2.7 9.1 4.6 Q9.1 5.8 7.9 6.4 Q7.0 6.9 7.0 8.1" fill="none" stroke="#fff" stroke-width="1.9"/><rect x="6.0" y="9.1" width="2" height="2" fill="#fff"/></svg>
<div style="position:absolute;left:662px;top:219.16px;font-size:11.62px;line-height:11.62px;color:#303030;white-space:nowrap;letter-spacing:0.481px;">Insert</div>
<div style="position:absolute;left:700px;top:215.5px;width:198px;height:18px;background:#fff;border:1px solid #606060;box-sizing:border-box;"></div>
<div style="position:absolute;left:704px;top:218.66px;font-size:11.62px;line-height:11.62px;color:#222;white-space:nowrap;letter-spacing:0.378px;">m_employee.employee_number</div>
<svg style="position:absolute;left:886px;top:219.5px;" width="9" height="8" viewBox="0 0 9 8"><path d="M0.5 0.5 L8 0.5 L4.25 7.5 Z" fill="#222"/></svg>
<div style="position:absolute;left:905px;top:219.16px;font-size:11.62px;line-height:11.62px;color:#303030;white-space:nowrap;letter-spacing:0.469px;">into</div>
<div style="position:absolute;left:931px;top:212px;width:50px;height:23px;background:#fff;border-bottom:1px solid #b8b8c0;box-sizing:border-box;"></div>
<div style="position:absolute;left:937px;top:219.16px;font-size:11.62px;line-height:11.62px;color:#222;white-space:nowrap;letter-spacing:0.580px;">=C3</div>
<svg style="position:absolute;left:966px;top:217px;" width="14" height="14" viewBox="0 0 14 14"><g shape-rendering="crispEdges"><rect x="0" y="0" width="10" height="11" fill="#8a8a8a"/><rect x="1" y="1" width="2" height="1" fill="#c8c8c8"/><rect x="1" y="3" width="2" height="1" fill="#c8c8c8"/><rect x="1" y="5" width="2" height="1" fill="#c8c8c8"/><rect x="1" y="7" width="2" height="1" fill="#c8c8c8"/><rect x="1" y="9" width="2" height="1" fill="#c8c8c8"/><rect x="4" y="1" width="2" height="1" fill="#c8c8c8"/><rect x="4" y="3" width="2" height="1" fill="#86d486"/><rect x="4" y="5" width="2" height="1" fill="#86d486"/><rect x="4" y="7" width="2" height="1" fill="#86d486"/><rect x="4" y="9" width="2" height="1" fill="#ffffff"/><rect x="7" y="1" width="2" height="1" fill="#c8c8c8"/><rect x="7" y="3" width="2" height="1" fill="#86d486"/><rect x="7" y="5" width="2" height="1" fill="#86d486"/><rect x="7" y="7" width="2" height="1" fill="#86d486"/><rect x="7" y="9" width="2" height="1" fill="#ffffff"/><rect x="4" y="4" width="5" height="1" fill="#3cb43c"/><rect x="4" y="6" width="5" height="1" fill="#3cb43c"/></g><path d="M10.2 8.8 L13.2 12.2" stroke="#1ea52a" stroke-width="2.1" stroke-linecap="round"/></svg>
<svg style="position:absolute;left:984px;top:219px;" width="15" height="14" viewBox="0 0 15 14"><circle cx="4.8" cy="4.7" r="4.7" fill="#f27a22"/><path d="M5.5 8.5 L9.3 11.3 L8.6 7" fill="#f27a22"/><path d="M3.3 3.6 Q3.3 1.9 4.8 1.9 Q6.3 1.9 6.3 3.3 Q6.3 4.2 5.4 4.6 Q4.8 4.9 4.8 5.8" fill="none" stroke="#fff" stroke-width="1.4"/><rect x="4.1" y="6.5" width="1.5" height="1.5" fill="#fff"/><ellipse cx="11.6" cy="8.6" rx="2.4" ry="1.7" fill="#7a5530"/><rect x="10" y="9" width="3.2" height="2.6" fill="#f6c89c"/><path d="M8.8 14 L8.8 13 Q8.8 11.8 11.6 11.8 Q14.4 11.8 14.4 13 L14.4 14 Z" fill="#23a8d8"/></svg>
<svg style="position:absolute;left:1011px;top:214px;" width="16" height="20" viewBox="0 0 16 20"><g transform="scale(0.8000,0.7692)"><path d="M5 4.5 L5 2 Q5 0.3 7 0.3 L13 0.3 Q15 0.3 15 2 L15 4.5 L13 4.5 L13 2.3 L7 2.3 L7 4.5 Z" fill="#8c8c8c"/><rect x="0" y="4" width="20" height="3" fill="#8c8c8c"/><path d="M0.2 8 L19.8 8 L17.5 25.8 L2.5 25.8 Z" fill="#8c8c8c"/><rect x="5" y="11" width="2" height="11" fill="#fff"/><rect x="9" y="11" width="2" height="11" fill="#fff"/><rect x="13" y="11" width="2" height="11" fill="#fff"/></g></svg>
<div style="position:absolute;left:662px;top:249.16px;font-size:11.62px;line-height:11.62px;color:#303030;white-space:nowrap;letter-spacing:0.481px;">Insert</div>
<div style="position:absolute;left:700px;top:245.5px;width:126px;height:18px;background:#fff;border:1px solid #606060;box-sizing:border-box;"></div>
<div style="position:absolute;left:704px;top:248.66px;font-size:11.62px;line-height:11.62px;color:#222;white-space:nowrap;letter-spacing:0.421px;">m_employee.name</div>
<svg style="position:absolute;left:814px;top:249.5px;" width="9" height="8" viewBox="0 0 9 8"><path d="M0.5 0.5 L8 0.5 L4.25 7.5 Z" fill="#222"/></svg>
<div style="position:absolute;left:833px;top:249.16px;font-size:11.62px;line-height:11.62px;color:#303030;white-space:nowrap;letter-spacing:0.469px;">into</div>
<div style="position:absolute;left:859px;top:242px;width:50px;height:23px;background:#fff;border-bottom:1px solid #b8b8c0;box-sizing:border-box;"></div>
<div style="position:absolute;left:865px;top:249.16px;font-size:11.62px;line-height:11.62px;color:#222;white-space:nowrap;letter-spacing:0.580px;">=C5</div>
<svg style="position:absolute;left:894px;top:247px;" width="14" height="14" viewBox="0 0 14 14"><g shape-rendering="crispEdges"><rect x="0" y="0" width="10" height="11" fill="#8a8a8a"/><rect x="1" y="1" width="2" height="1" fill="#c8c8c8"/><rect x="1" y="3" width="2" height="1" fill="#c8c8c8"/><rect x="1" y="5" width="2" height="1" fill="#c8c8c8"/><rect x="1" y="7" width="2" height="1" fill="#c8c8c8"/><rect x="1" y="9" width="2" height="1" fill="#c8c8c8"/><rect x="4" y="1" width="2" height="1" fill="#c8c8c8"/><rect x="4" y="3" width="2" height="1" fill="#86d486"/><rect x="4" y="5" width="2" height="1" fill="#86d486"/><rect x="4" y="7" width="2" height="1" fill="#86d486"/><rect x="4" y="9" width="2" height="1" fill="#ffffff"/><rect x="7" y="1" width="2" height="1" fill="#c8c8c8"/><rect x="7" y="3" width="2" height="1" fill="#86d486"/><rect x="7" y="5" width="2" height="1" fill="#86d486"/><rect x="7" y="7" width="2" height="1" fill="#86d486"/><rect x="7" y="9" width="2" height="1" fill="#ffffff"/><rect x="4" y="4" width="5" height="1" fill="#3cb43c"/><rect x="4" y="6" width="5" height="1" fill="#3cb43c"/></g><path d="M10.2 8.8 L13.2 12.2" stroke="#1ea52a" stroke-width="2.1" stroke-linecap="round"/></svg>
<svg style="position:absolute;left:912px;top:249px;" width="15" height="14" viewBox="0 0 15 14"><circle cx="4.8" cy="4.7" r="4.7" fill="#f27a22"/><path d="M5.5 8.5 L9.3 11.3 L8.6 7" fill="#f27a22"/><path d="M3.3 3.6 Q3.3 1.9 4.8 1.9 Q6.3 1.9 6.3 3.3 Q6.3 4.2 5.4 4.6 Q4.8 4.9 4.8 5.8" fill="none" stroke="#fff" stroke-width="1.4"/><rect x="4.1" y="6.5" width="1.5" height="1.5" fill="#fff"/><ellipse cx="11.6" cy="8.6" rx="2.4" ry="1.7" fill="#7a5530"/><rect x="10" y="9" width="3.2" height="2.6" fill="#f6c89c"/><path d="M8.8 14 L8.8 13 Q8.8 11.8 11.6 11.8 Q14.4 11.8 14.4 13 L14.4 14 Z" fill="#23a8d8"/></svg>
<svg style="position:absolute;left:939px;top:244px;" width="16" height="20" viewBox="0 0 16 20"><g transform="scale(0.8000,0.7692)"><path d="M5 4.5 L5 2 Q5 0.3 7 0.3 L13 0.3 Q15 0.3 15 2 L15 4.5 L13 4.5 L13 2.3 L7 2.3 L7 4.5 Z" fill="#8c8c8c"/><rect x="0" y="4" width="20" height="3" fill="#8c8c8c"/><path d="M0.2 8 L19.8 8 L17.5 25.8 L2.5 25.8 Z" fill="#8c8c8c"/><rect x="5" y="11" width="2" height="11" fill="#fff"/><rect x="9" y="11" width="2" height="11" fill="#fff"/><rect x="13" y="11" width="2" height="11" fill="#fff"/></g></svg>
<div style="position:absolute;left:662px;top:279.16px;font-size:11.62px;line-height:11.62px;color:#303030;white-space:nowrap;letter-spacing:0.481px;">Insert</div>
<div style="position:absolute;left:700px;top:275.5px;width:159px;height:18px;background:#fff;border:1px solid #606060;box-sizing:border-box;"></div>
<div style="position:absolute;left:704px;top:278.66px;font-size:11.62px;line-height:11.62px;color:#222;white-space:nowrap;letter-spacing:0.377px;">m_employee.department</div>
<svg style="position:absolute;left:847px;top:279.5px;" width="9" height="8" viewBox="0 0 9 8"><path d="M0.5 0.5 L8 0.5 L4.25 7.5 Z" fill="#222"/></svg>
<div style="position:absolute;left:866px;top:279.16px;font-size:11.62px;line-height:11.62px;color:#303030;white-space:nowrap;letter-spacing:0.469px;">into</div>
<div style="position:absolute;left:892px;top:272px;width:50px;height:23px;background:#fff;border-bottom:1px solid #b8b8c0;box-sizing:border-box;"></div>
<div style="position:absolute;left:898px;top:279.16px;font-size:11.62px;line-height:11.62px;color:#222;white-space:nowrap;letter-spacing:0.580px;">=C7</div>
<svg style="position:absolute;left:927px;top:277px;" width="14" height="14" viewBox="0 0 14 14"><g shape-rendering="crispEdges"><rect x="0" y="0" width="10" height="11" fill="#8a8a8a"/><rect x="1" y="1" width="2" height="1" fill="#c8c8c8"/><rect x="1" y="3" width="2" height="1" fill="#c8c8c8"/><rect x="1" y="5" width="2" height="1" fill="#c8c8c8"/><rect x="1" y="7" width="2" height="1" fill="#c8c8c8"/><rect x="1" y="9" width="2" height="1" fill="#c8c8c8"/><rect x="4" y="1" width="2" height="1" fill="#c8c8c8"/><rect x="4" y="3" width="2" height="1" fill="#86d486"/><rect x="4" y="5" width="2" height="1" fill="#86d486"/><rect x="4" y="7" width="2" height="1" fill="#86d486"/><rect x="4" y="9" width="2" height="1" fill="#ffffff"/><rect x="7" y="1" width="2" height="1" fill="#c8c8c8"/><rect x="7" y="3" width="2" height="1" fill="#86d486"/><rect x="7" y="5" width="2" height="1" fill="#86d486"/><rect x="7" y="7" width="2" height="1" fill="#86d486"/><rect x="7" y="9" width="2" height="1" fill="#ffffff"/><rect x="4" y="4" width="5" height="1" fill="#3cb43c"/><rect x="4" y="6" width="5" height="1" fill="#3cb43c"/></g><path d="M10.2 8.8 L13.2 12.2" stroke="#1ea52a" stroke-width="2.1" stroke-linecap="round"/></svg>
<svg style="position:absolute;left:945px;top:279px;" width="15" height="14" viewBox="0 0 15 14"><circle cx="4.8" cy="4.7" r="4.7" fill="#f27a22"/><path d="M5.5 8.5 L9.3 11.3 L8.6 7" fill="#f27a22"/><path d="M3.3 3.6 Q3.3 1.9 4.8 1.9 Q6.3 1.9 6.3 3.3 Q6.3 4.2 5.4 4.6 Q4.8 4.9 4.8 5.8" fill="none" stroke="#fff" stroke-width="1.4"/><rect x="4.1" y="6.5" width="1.5" height="1.5" fill="#fff"/><ellipse cx="11.6" cy="8.6" rx="2.4" ry="1.7" fill="#7a5530"/><rect x="10" y="9" width="3.2" height="2.6" fill="#f6c89c"/><path d="M8.8 14 L8.8 13 Q8.8 11.8 11.6 11.8 Q14.4 11.8 14.4 13 L14.4 14 Z" fill="#23a8d8"/></svg>
<svg style="position:absolute;left:972px;top:274px;" width="16" height="20" viewBox="0 0 16 20"><g transform="scale(0.8000,0.7692)"><path d="M5 4.5 L5 2 Q5 0.3 7 0.3 L13 0.3 Q15 0.3 15 2 L15 4.5 L13 4.5 L13 2.3 L7 2.3 L7 4.5 Z" fill="#8c8c8c"/><rect x="0" y="4" width="20" height="3" fill="#8c8c8c"/><path d="M0.2 8 L19.8 8 L17.5 25.8 L2.5 25.8 Z" fill="#8c8c8c"/><rect x="5" y="11" width="2" height="11" fill="#fff"/><rect x="9" y="11" width="2" height="11" fill="#fff"/><rect x="13" y="11" width="2" height="11" fill="#fff"/></g></svg>
<div style="position:absolute;left:662px;top:309.16px;font-size:11.62px;line-height:11.62px;color:#303030;white-space:nowrap;letter-spacing:0.481px;">Insert</div>
<div style="position:absolute;left:700px;top:305.5px;width:109px;height:18px;background:#fff;border:1px solid #606060;box-sizing:border-box;"></div>
<div style="position:absolute;left:704px;top:308.66px;font-size:11.62px;line-height:11.62px;color:#222;white-space:nowrap;letter-spacing:0.494px;">(Select column)</div>
<svg style="position:absolute;left:797px;top:309.5px;" width="9" height="8" viewBox="0 0 9 8"><path d="M0.5 0.5 L8 0.5 L4.25 7.5 Z" fill="#222"/></svg>
<div style="position:absolute;left:816px;top:309.16px;font-size:11.62px;line-height:11.62px;color:#303030;white-space:nowrap;letter-spacing:0.469px;">into</div>
<div style="position:absolute;left:842px;top:302px;width:35px;height:23px;background:#fff;border-bottom:1px solid #b8b8c0;box-sizing:border-box;"></div>
<svg style="position:absolute;left:862px;top:307px;" width="14" height="14" viewBox="0 0 14 14"><g shape-rendering="crispEdges"><rect x="0" y="0" width="10" height="11" fill="#8a8a8a"/><rect x="1" y="1" width="2" height="1" fill="#c8c8c8"/><rect x="1" y="3" width="2" height="1" fill="#c8c8c8"/><rect x="1" y="5" width="2" height="1" fill="#c8c8c8"/><rect x="1" y="7" width="2" height="1" fill="#c8c8c8"/><rect x="1" y="9" width="2" height="1" fill="#c8c8c8"/><rect x="4" y="1" width="2" height="1" fill="#c8c8c8"/><rect x="4" y="3" width="2" height="1" fill="#86d486"/><rect x="4" y="5" width="2" height="1" fill="#86d486"/><rect x="4" y="7" width="2" height="1" fill="#86d486"/><rect x="4" y="9" width="2" height="1" fill="#ffffff"/><rect x="7" y="1" width="2" height="1" fill="#c8c8c8"/><rect x="7" y="3" width="2" height="1" fill="#86d486"/><rect x="7" y="5" width="2" height="1" fill="#86d486"/><rect x="7" y="7" width="2" height="1" fill="#86d486"/><rect x="7" y="9" width="2" height="1" fill="#ffffff"/><rect x="4" y="4" width="5" height="1" fill="#3cb43c"/><rect x="4" y="6" width="5" height="1" fill="#3cb43c"/></g><path d="M10.2 8.8 L13.2 12.2" stroke="#1ea52a" stroke-width="2.1" stroke-linecap="round"/></svg>
<svg style="position:absolute;left:880px;top:309px;" width="15" height="14" viewBox="0 0 15 14"><circle cx="4.8" cy="4.7" r="4.7" fill="#f27a22"/><path d="M5.5 8.5 L9.3 11.3 L8.6 7" fill="#f27a22"/><path d="M3.3 3.6 Q3.3 1.9 4.8 1.9 Q6.3 1.9 6.3 3.3 Q6.3 4.2 5.4 4.6 Q4.8 4.9 4.8 5.8" fill="none" stroke="#fff" stroke-width="1.4"/><rect x="4.1" y="6.5" width="1.5" height="1.5" fill="#fff"/><ellipse cx="11.6" cy="8.6" rx="2.4" ry="1.7" fill="#7a5530"/><rect x="10" y="9" width="3.2" height="2.6" fill="#f6c89c"/><path d="M8.8 14 L8.8 13 Q8.8 11.8 11.6 11.8 Q14.4 11.8 14.4 13 L14.4 14 Z" fill="#23a8d8"/></svg>
<div style="position:absolute;left:663px;top:334px;width:12px;height:12px;background:#fff;border:1px solid #606a78;box-sizing:border-box;"></div>
<div style="position:absolute;left:678.5px;top:334.16px;font-size:11.62px;line-height:11.62px;color:#303030;white-space:nowrap;letter-spacing:0.326px;">Set the registered ID in the next cell</div>
<svg style="position:absolute;left:878px;top:334px;" width="14" height="14" viewBox="0 0 14 14"><circle cx="7" cy="6.6" r="6.5" fill="#f27a22"/><path d="M1.2 9.5 L0.6 13.8 L5.5 12" fill="#f27a22"/><path d="M4.9 5.0 Q4.9 2.7 7.0 2.7 Q9.1 2.7 9.1 4.6 Q9.1 5.8 7.9 6.4 Q7.0 6.9 7.0 8.1" fill="none" stroke="#fff" stroke-width="1.9"/><rect x="6.0" y="9.1" width="2" height="2" fill="#fff"/></svg>
<div style="position:absolute;left:898px;top:330px;width:35px;height:17px;background:#fff;border-bottom:1px solid #b8b8c0;box-sizing:border-box;"></div>
<div style="position:absolute;left:916px;top:330px;width:1px;height:17px;background:#d8d8d8;"></div>
<svg style="position:absolute;left:918px;top:332px;" width="14" height="14" viewBox="0 0 14 14"><g shape-rendering="crispEdges"><rect x="0" y="0" width="10" height="11" fill="#8a8a8a"/><rect x="1" y="1" width="2" height="1" fill="#c8c8c8"/><rect x="1" y="3" width="2" height="1" fill="#c8c8c8"/><rect x="1" y="5" width="2" height="1" fill="#c8c8c8"/><rect x="1" y="7" width="2" height="1" fill="#c8c8c8"/><rect x="1" y="9" width="2" height="1" fill="#c8c8c8"/><rect x="4" y="1" width="2" height="1" fill="#c8c8c8"/><rect x="4" y="3" width="2" height="1" fill="#86d486"/><rect x="4" y="5" width="2" height="1" fill="#86d486"/><rect x="4" y="7" width="2" height="1" fill="#86d486"/><rect x="4" y="9" width="2" height="1" fill="#ffffff"/><rect x="7" y="1" width="2" height="1" fill="#c8c8c8"/><rect x="7" y="3" width="2" height="1" fill="#86d486"/><rect x="7" y="5" width="2" height="1" fill="#86d486"/><rect x="7" y="7" width="2" height="1" fill="#86d486"/><rect x="7" y="9" width="2" height="1" fill="#ffffff"/><rect x="4" y="4" width="5" height="1" fill="#3cb43c"/><rect x="4" y="6" width="5" height="1" fill="#3cb43c"/></g><path d="M10.2 8.8 L13.2 12.2" stroke="#1ea52a" stroke-width="2.1" stroke-linecap="round"/></svg>
<svg style="position:absolute;left:936px;top:334px;" width="15" height="14" viewBox="0 0 15 14"><circle cx="4.8" cy="4.7" r="4.7" fill="#f27a22"/><path d="M5.5 8.5 L9.3 11.3 L8.6 7" fill="#f27a22"/><path d="M3.3 3.6 Q3.3 1.9 4.8 1.9 Q6.3 1.9 6.3 3.3 Q6.3 4.2 5.4 4.6 Q4.8 4.9 4.8 5.8" fill="none" stroke="#fff" stroke-width="1.4"/><rect x="4.1" y="6.5" width="1.5" height="1.5" fill="#fff"/><ellipse cx="11.6" cy="8.6" rx="2.4" ry="1.7" fill="#7a5530"/><rect x="10" y="9" width="3.2" height="2.6" fill="#f6c89c"/><path d="M8.8 14 L8.8 13 Q8.8 11.8 11.6 11.8 Q14.4 11.8 14.4 13 L14.4 14 Z" fill="#23a8d8"/></svg>
<div style="position:absolute;left:23px;top:817px;width:76px;height:29px;background:#7a7a7a;border-radius:4px;"></div>
<div style="position:absolute;left:35.5px;top:827.30px;font-size:12.63px;line-height:12.63px;color:#f4f4f4;white-space:nowrap;letter-spacing:1.032px;">Test run</div>
<div style="position:absolute;left:108px;top:817px;width:76px;height:29px;background:#7a7a7a;border-radius:4px;"></div>
<div style="position:absolute;left:125.5px;top:827.30px;font-size:12.63px;line-height:12.63px;color:#f4f4f4;white-space:nowrap;letter-spacing:1.153px;">Debug</div>
<div style="position:absolute;left:193px;top:821px;width:166px;height:21px;background:#fff;border:1px solid #5a5a5a;box-sizing:border-box;"></div>
<div style="position:absolute;left:197.5px;top:827.30px;font-size:12.63px;line-height:12.63px;color:#555;white-space:nowrap;letter-spacing:0.873px;">Register Button (C9)</div>
<svg style="position:absolute;left:348px;top:828px;" width="8" height="7" viewBox="0 0 8 7"><path d="M0.3 0.3 L7.7 0.3 L4 6.8 Z" fill="#444"/></svg>
<svg style="position:absolute;left:364px;top:824px;" width="14" height="14" viewBox="0 0 14 14"><circle cx="7" cy="6.6" r="6.5" fill="#f27a22"/><path d="M1.2 9.5 L0.6 13.8 L5.5 12" fill="#f27a22"/><path d="M4.9 5.0 Q4.9 2.7 7.0 2.7 Q9.1 2.7 9.1 4.6 Q9.1 5.8 7.9 6.4 Q7.0 6.9 7.0 8.1" fill="none" stroke="#fff" stroke-width="1.9"/><rect x="6.0" y="9.1" width="2" height="2" fill="#fff"/></svg>
<div style="position:absolute;left:1041px;top:817px;width:76px;height:29px;background:#7a7a7a;border-radius:4px;"></div>
<div style="position:absolute;left:1064px;top:827.30px;font-size:12.63px;line-height:12.63px;color:#f4f4f4;white-space:nowrap;letter-spacing:1.045px;">Save</div>
<div style="position:absolute;left:1126px;top:817px;width:76px;height:29px;background:#7a7a7a;border-radius:4px;"></div>
<div style="position:absolute;left:1143px;top:827.30px;font-size:12.63px;line-height:12.63px;color:#f4f4f4;white-space:nowrap;letter-spacing:0.881px;">Cancel</div>
</body></html>
